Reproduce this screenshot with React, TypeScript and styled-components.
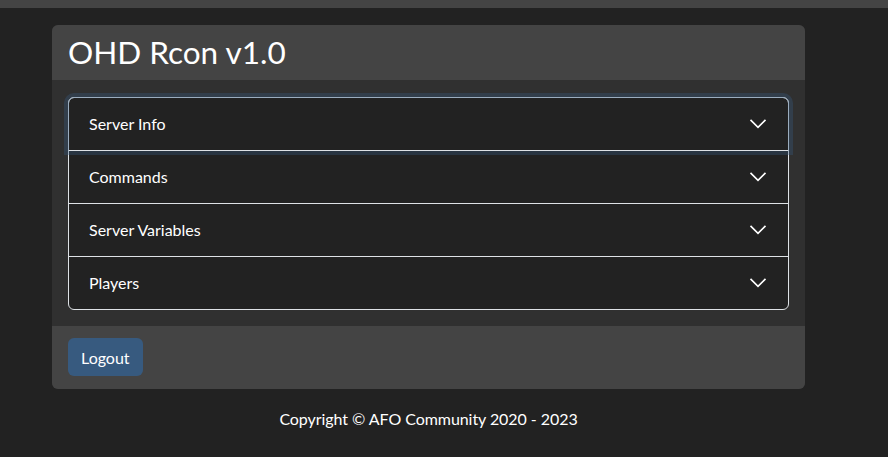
import React, { useState } from 'react';
import styled, { createGlobalStyle } from 'styled-components';

const GlobalStyle = createGlobalStyle`
  * { box-sizing: border-box; }
  html, body {
    margin: 0;
    padding: 0;
    background: #222222;
    color: #ffffff;
    font-family: Lato, "Open Sans", "Liberation Sans", sans-serif;
    font-size: 16px;
    line-height: 1.5;
  }
`;

const TopBar = styled.div`
  height: 8px;
  background: #444444;
`;

const Main = styled.main`
  width: 753px;
  margin: 17px 0 0 52px;
`;

const Card = styled.section`
  border-radius: 6px;
  overflow: hidden;
  background: #303030;
`;

const CardHeader = styled.header`
  height: 55px;
  background: #444444;
  padding: 0 16px;
  display: flex;
  align-items: center;
`;

const Title = styled.h1`
  margin: 0;
  font-size: 31.5px;
  font-weight: 400;
  line-height: 1.2;
  color: #ffffff;
`;

const CardBody = styled.div`
  padding: 17px 16px 16px;
`;

const Accordion = styled.div`
  border: 1px solid #dee2e6;
  border-radius: 6px;
  background: #222222;
`;

const Item = styled.div<{ $focused?: boolean }>`
  position: relative;
  & + & {
    border-top: 1px solid #dee2e6;
  }
  ${({ $focused }) =>
    $focused &&
    `
    &::after {
      content: '';
      position: absolute;
      inset: -1px;
      border: 1px solid #9badbf;
      border-radius: 6px 6px 0 0;
      box-shadow: 0 0 0 4px rgba(55, 90, 127, 0.35);
      pointer-events: none;
    }
  `}
`;

const ItemButton = styled.button`
  width: 100%;
  height: 52px;
  padding: 0 20px 2px;
  display: flex;
  align-items: center;
  justify-content: space-between;
  background: transparent;
  border: 0;
  color: #ffffff;
  font-family: inherit;
  font-size: 16px;
  text-align: left;
  cursor: pointer;
  outline: none;
`;

const Chevron = styled.svg`
  width: 20px;
  height: 20px;
  flex-shrink: 0;
`;

const CardFooter = styled.footer`
  height: 63px;
  background: #444444;
  padding: 0 16px 1px;
  display: flex;
  align-items: center;
`;

const Button = styled.button`
  height: 38px;
  padding: 0 13px;
  background: #375a7f;
  border: 0;
  border-radius: 6px;
  color: #ffffff;
  font-family: inherit;
  font-size: 16px;
  cursor: pointer;
`;

const Copyright = styled.p`
  margin: 18px 0 0;
  text-align: center;
  font-size: 16px;
  letter-spacing: -0.06px;
`;

const sections = ['Server Info', 'Commands', 'Server Variables', 'Players'];

export default function App() {
  const [focused, setFocused] = useState(0);

  return (
    <>
      <GlobalStyle />
      <TopBar />
      <Main>
        <Card>
          <CardHeader>
            <Title>OHD Rcon v1.0</Title>
          </CardHeader>
          <CardBody>
            <Accordion>
              {sections.map((name, i) => (
                <Item key={name} $focused={focused === i}>
                  <ItemButton onClick={() => setFocused(i)}>
                    {name}
                    <Chevron viewBox="0 0 16 16" fill="none">
                      <path d="M2 5.5L8 11.5L14 5.5" stroke="#ffffff" strokeWidth="1.3" />
                    </Chevron>
                  </ItemButton>
                </Item>
              ))}
            </Accordion>
          </CardBody>
          <CardFooter>
            <Button>Logout</Button>
          </CardFooter>
        </Card>
        <Copyright>Copyright © AFO Community 2020 - 2023</Copyright>
      </Main>
    </>
  );
}
